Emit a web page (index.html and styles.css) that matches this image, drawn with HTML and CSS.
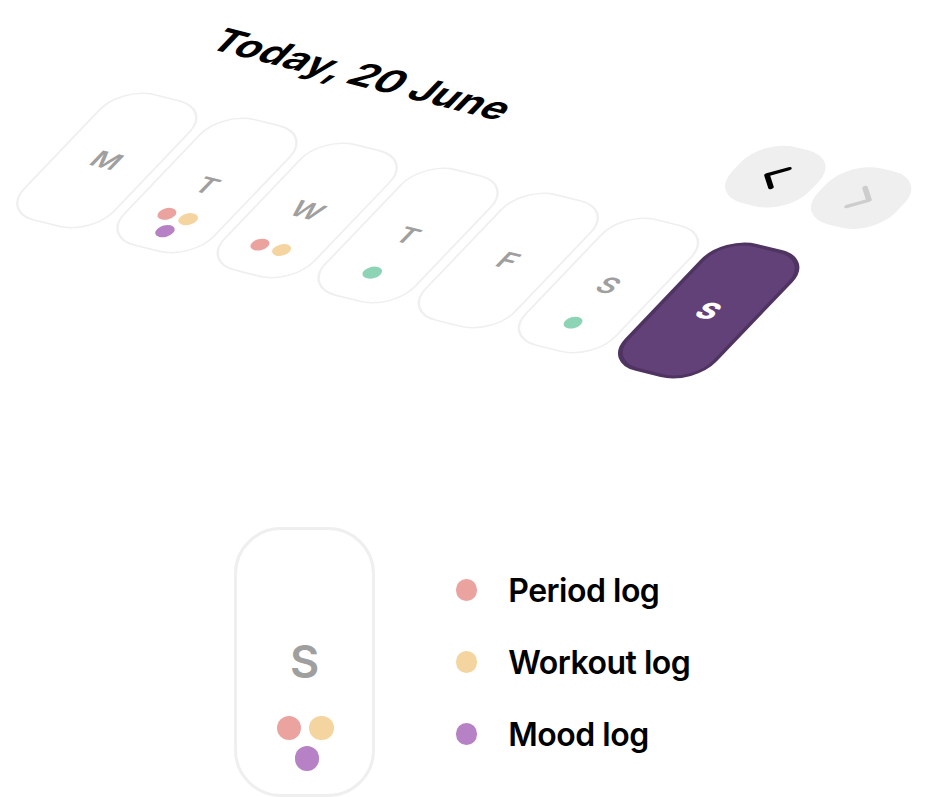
FILE: index.html
```html
<!DOCTYPE html>
<html lang="en">
<head>
<meta charset="utf-8">
<title>Cycle calendar</title>
<link rel="stylesheet" href="styles.css">
</head>
<body>
<section class="scene">
  <div class="plane">
    <header class="header">
      <h1 class="title">Today, 20 June</h1>
      <nav class="nav">
        <button class="nav-btn" aria-label="Previous week"><svg viewBox="0 0 30 50"><path d="M22 5 2 25l20 20"/></svg></button>
        <button class="nav-btn nav-btn-off" aria-label="Next week"><svg viewBox="0 0 30 50"><path d="m8 5 20 20L8 45"/></svg></button>
      </nav>
    </header>
    <div class="week">
      <div class="day"><span class="letter">M</span></div>
      <div class="day"><span class="letter">T</span><div class="dots dots-three"><i class="dot period"></i><i class="dot workout"></i><i class="dot mood"></i></div></div>
      <div class="day"><span class="letter">W</span><div class="dots dots-two"><i class="dot period"></i><i class="dot workout"></i></div></div>
      <div class="day"><span class="letter">T</span><div class="dots"><i class="dot rest"></i></div></div>
      <div class="day"><span class="letter">F</span></div>
      <div class="day"><span class="letter">S</span><div class="dots"><i class="dot rest"></i></div></div>
      <div class="day day-active"><span class="letter">S</span></div>
    </div>
  </div>
</section>
<section class="key">
  <div class="day day-sample"><span class="letter">S</span><div class="dots dots-three"><i class="dot period"></i><i class="dot workout"></i><i class="dot mood"></i></div></div>
  <ul class="legend">
    <li><i class="dot period"></i><span>Period log</span></li>
    <li><i class="dot workout"></i><span>Workout log</span></li>
    <li><i class="dot mood"></i><span>Mood log</span></li>
  </ul>
</section>
</body>
</html>
```
FILE: styles.css
```css
* { box-sizing: border-box; }
body {
  margin: 0;
  width: 926px;
  height: 797px;
  overflow: hidden;
  background: #fff;
  color: #000;
  font-family: Inter, "Liberation Sans", sans-serif;
}
.scene { height: 527px; }
.plane {
  width: 1059.2px;
  transform: matrix(.655, .1632, -.449, .47, 203.7, -.4);
  transform-origin: 0 0;
}
.header {
  display: flex;
  align-items: center;
  justify-content: space-between;
  height: 119px;
  margin: 0 -44.5px 64px 0;
  padding-left: 61px;
}
.title { margin: 0; font-size: 60px; font-weight: 700; line-height: 1; letter-spacing: -.2px; white-space: nowrap; }
.nav { display: flex; gap: 11.6px; }
.nav-btn {
  display: flex;
  align-items: center;
  justify-content: center;
  width: 119px;
  height: 119px;
  padding: 0;
  border: 0;
  border-radius: 50px;
  background: #efefef;
  color: #000;
}
.nav-btn-off { color: #cdcdcd; }
.nav-btn svg {
  width: 30px;
  height: 50px;
  overflow: visible;
  fill: none;
  stroke: currentColor;
  stroke-width: 7;
  stroke-linecap: round;
  stroke-linejoin: round;
}
.week { display: flex; gap: 13.2px; }
.day {
  display: grid;
  grid-template-rows: 1fr 46px 1fr;
  justify-items: center;
  flex: none;
  width: 140px;
  height: 270px;
  border: 3px solid #efefef;
  border-radius: 51px;
}
.day-active { border: 6px solid #4f3361; background: #624078; }
.day-sample { width: 140.6px; border-radius: 47px; }
.letter { grid-row: 2; color: #9f9f9f; font-size: 42px; font-weight: 600; line-height: 46px; }
.day-sample .letter { font-size: 45px; }
.day-active .letter { color: #fff; font-size: 43px; font-weight: 800; }
.dots {
  grid-row: 3;
  display: flex;
  flex-wrap: wrap;
  align-content: flex-start;
  justify-content: center;
  gap: 5.8px 8.6px;
  width: 58px;
  padding-top: 43.5px;
}
.dots-two { position: relative; left: -2px; }
.dots-three { padding-top: 31px; }
.day-sample .dots { margin-left: 1px; }
.dot { display: block; flex: none; width: 24.4px; height: 24.4px; border-radius: 50%; }
.dots .mood { margin-left: 3.5px; }
.period { background: #eba3a0; }
.workout { background: #f5d59f; }
.mood { background: #b681c5; }
.rest { background: #8dd4b7; }
.key { display: flex; padding-left: 234.4px; }
.legend {
  display: grid;
  grid-auto-rows: 72px;
  align-items: center;
  margin: 0;
  padding: 27px 0 0 80.6px;
  list-style: none;
}
.legend li { display: flex; align-items: center; gap: 31.3px; }
.legend .dot { width: 21.4px; height: 21.4px; }
.legend span { padding-top: 2px; font-size: 32px; font-weight: 600; letter-spacing: -.5px; line-height: 40px; white-space: nowrap; }
```
